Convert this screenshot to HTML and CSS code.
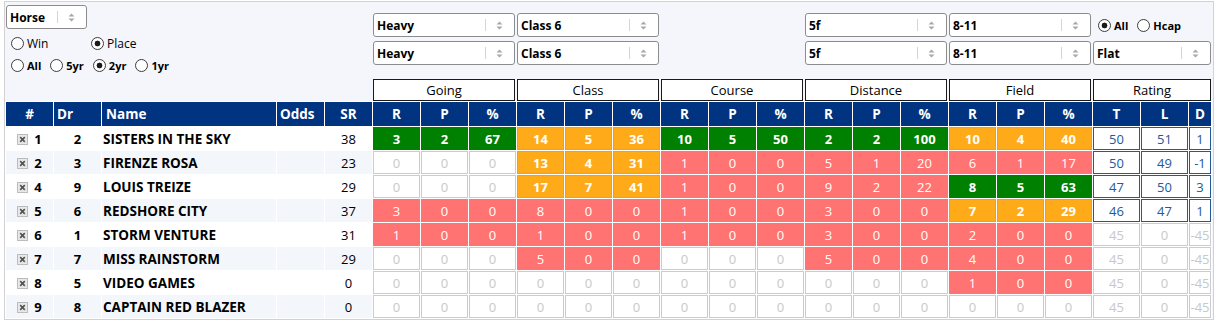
FILE: index.html
```html
<!DOCTYPE html>
<html>
 <head>
  <title>Form</title>
  <meta charset="utf-8" />
  <link rel="stylesheet" href="styles.css">
 </head>
 <body>
  <div class="panel">
   <div class="filters">
    <div class="f-left">
     <div class="sel horse"><span class="val">Horse</span><span class="arr"><svg width="7" height="11" viewBox="0 0 7 11"><path d="M0.5 4.5L3.5 1.5L6.5 4.5ZM0.5 6.5L3.5 9.5L6.5 6.5Z" fill="#a8a8a8"/></svg></span></div>
     <div class="radios big">
      <label class="win"><input type="radio" name="wp">Win</label>
      <label><input type="radio" name="wp" checked>Place</label>
     </div>
     <div class="radios">
      <label><input type="radio" name="yr">All</label>
      <label><input type="radio" name="yr">5yr</label>
      <label><input type="radio" name="yr" checked>2yr</label>
      <label><input type="radio" name="yr">1yr</label>
     </div>
    </div>
    <div class="f-col">
     <div class="sel"><span class="val">Heavy</span><span class="arr"><svg width="7" height="11" viewBox="0 0 7 11"><path d="M0.5 4.5L3.5 1.5L6.5 4.5ZM0.5 6.5L3.5 9.5L6.5 6.5Z" fill="#a8a8a8"/></svg></span></div>
     <div class="sel"><span class="val">Heavy</span><span class="arr"><svg width="7" height="11" viewBox="0 0 7 11"><path d="M0.5 4.5L3.5 1.5L6.5 4.5ZM0.5 6.5L3.5 9.5L6.5 6.5Z" fill="#a8a8a8"/></svg></span></div>
    </div>
    <div class="f-col">
     <div class="sel"><span class="val">Class 6</span><span class="arr"><svg width="7" height="11" viewBox="0 0 7 11"><path d="M0.5 4.5L3.5 1.5L6.5 4.5ZM0.5 6.5L3.5 9.5L6.5 6.5Z" fill="#a8a8a8"/></svg></span></div>
     <div class="sel"><span class="val">Class 6</span><span class="arr"><svg width="7" height="11" viewBox="0 0 7 11"><path d="M0.5 4.5L3.5 1.5L6.5 4.5ZM0.5 6.5L3.5 9.5L6.5 6.5Z" fill="#a8a8a8"/></svg></span></div>
    </div>
    <div class="f-col"></div>
    <div class="f-col">
     <div class="sel"><span class="val">5f</span><span class="arr"><svg width="7" height="11" viewBox="0 0 7 11"><path d="M0.5 4.5L3.5 1.5L6.5 4.5ZM0.5 6.5L3.5 9.5L6.5 6.5Z" fill="#a8a8a8"/></svg></span></div>
     <div class="sel"><span class="val">5f</span><span class="arr"><svg width="7" height="11" viewBox="0 0 7 11"><path d="M0.5 4.5L3.5 1.5L6.5 4.5ZM0.5 6.5L3.5 9.5L6.5 6.5Z" fill="#a8a8a8"/></svg></span></div>
    </div>
    <div class="f-col">
     <div class="sel"><span class="val">8-11</span><span class="arr"><svg width="7" height="11" viewBox="0 0 7 11"><path d="M0.5 4.5L3.5 1.5L6.5 4.5ZM0.5 6.5L3.5 9.5L6.5 6.5Z" fill="#a8a8a8"/></svg></span></div>
     <div class="sel"><span class="val">8-11</span><span class="arr"><svg width="7" height="11" viewBox="0 0 7 11"><path d="M0.5 4.5L3.5 1.5L6.5 4.5ZM0.5 6.5L3.5 9.5L6.5 6.5Z" fill="#a8a8a8"/></svg></span></div>
    </div>
    <div class="f-col">
     <div class="radios hcap">
      <label><input type="radio" name="hc" checked>All</label>
      <label><input type="radio" name="hc">Hcap</label>
     </div>
     <div class="sel"><span class="val">Flat</span><span class="arr"><svg width="7" height="11" viewBox="0 0 7 11"><path d="M0.5 4.5L3.5 1.5L6.5 4.5ZM0.5 6.5L3.5 9.5L6.5 6.5Z" fill="#a8a8a8"/></svg></span></div>
    </div>
   </div>

   <div class="groups">
    <div></div>
    <div class="grp">Going</div>
    <div class="grp">Class</div>
    <div class="grp">Course</div>
    <div class="grp">Distance</div>
    <div class="grp">Field</div>
    <div class="grp">Rating</div>
   </div>

   <table class="form">
    <thead>
     <tr>
      <th>#</th><th class="l">Dr</th><th class="l nm">Name</th><th class="l">Odds</th><th>SR</th>
      <th>R</th><th>P</th><th>%</th>
      <th>R</th><th>P</th><th>%</th>
      <th>R</th><th>P</th><th>%</th>
      <th>R</th><th>P</th><th>%</th>
      <th>R</th><th>P</th><th>%</th>
      <th>T</th><th>L</th><th class="dd">D</th>
     </tr>
    </thead>
    <tbody>
     <tr>
      <td class="no"><svg class="xb" width="11" height="11" viewBox="0 0 11 11"><rect x="0.5" y="0.5" width="10" height="10" fill="#e8e8e8" stroke="#bcbcbc"/><path d="M3.2 3.2L7.8 7.8M7.8 3.2L3.2 7.8" stroke="#555" stroke-width="1.7"/></svg>1</td>
      <td class="dr">2</td><td class="name">SISTERS IN THE SKY</td><td></td><td class="sr">38</td>
      <td class="g">3</td><td class="g">2</td><td class="g">67</td>
      <td class="o">14</td><td class="o">5</td><td class="o">36</td>
      <td class="g">10</td><td class="g">5</td><td class="g">50</td>
      <td class="g">2</td><td class="g">2</td><td class="g">100</td>
      <td class="o">10</td><td class="o">4</td><td class="o">40</td>
      <td class="t">50</td><td class="t">51</td><td class="t">1</td>
     </tr>
     <tr>
      <td class="no"><svg class="xb" width="11" height="11" viewBox="0 0 11 11"><rect x="0.5" y="0.5" width="10" height="10" fill="#e8e8e8" stroke="#bcbcbc"/><path d="M3.2 3.2L7.8 7.8M7.8 3.2L3.2 7.8" stroke="#555" stroke-width="1.7"/></svg>2</td>
      <td class="dr">3</td><td class="name">FIRENZE ROSA</td><td></td><td class="sr">23</td>
      <td class="z">0</td><td class="z">0</td><td class="z">0</td>
      <td class="o">13</td><td class="o">4</td><td class="o">31</td>
      <td class="r">1</td><td class="r">0</td><td class="r">0</td>
      <td class="r">5</td><td class="r">1</td><td class="r">20</td>
      <td class="r">6</td><td class="r">1</td><td class="r">17</td>
      <td class="t">50</td><td class="t">49</td><td class="t">-1</td>
     </tr>
     <tr>
      <td class="no"><svg class="xb" width="11" height="11" viewBox="0 0 11 11"><rect x="0.5" y="0.5" width="10" height="10" fill="#e8e8e8" stroke="#bcbcbc"/><path d="M3.2 3.2L7.8 7.8M7.8 3.2L3.2 7.8" stroke="#555" stroke-width="1.7"/></svg>4</td>
      <td class="dr">9</td><td class="name">LOUIS TREIZE</td><td></td><td class="sr">29</td>
      <td class="z">0</td><td class="z">0</td><td class="z">0</td>
      <td class="o">17</td><td class="o">7</td><td class="o">41</td>
      <td class="r">1</td><td class="r">0</td><td class="r">0</td>
      <td class="r">9</td><td class="r">2</td><td class="r">22</td>
      <td class="g">8</td><td class="g">5</td><td class="g">63</td>
      <td class="t">47</td><td class="t">50</td><td class="t">3</td>
     </tr>
     <tr>
      <td class="no"><svg class="xb" width="11" height="11" viewBox="0 0 11 11"><rect x="0.5" y="0.5" width="10" height="10" fill="#e8e8e8" stroke="#bcbcbc"/><path d="M3.2 3.2L7.8 7.8M7.8 3.2L3.2 7.8" stroke="#555" stroke-width="1.7"/></svg>5</td>
      <td class="dr">6</td><td class="name">REDSHORE CITY</td><td></td><td class="sr">37</td>
      <td class="r">3</td><td class="r">0</td><td class="r">0</td>
      <td class="r">8</td><td class="r">0</td><td class="r">0</td>
      <td class="r">1</td><td class="r">0</td><td class="r">0</td>
      <td class="r">3</td><td class="r">0</td><td class="r">0</td>
      <td class="o">7</td><td class="o">2</td><td class="o">29</td>
      <td class="t">46</td><td class="t">47</td><td class="t">1</td>
     </tr>
     <tr>
      <td class="no"><svg class="xb" width="11" height="11" viewBox="0 0 11 11"><rect x="0.5" y="0.5" width="10" height="10" fill="#e8e8e8" stroke="#bcbcbc"/><path d="M3.2 3.2L7.8 7.8M7.8 3.2L3.2 7.8" stroke="#555" stroke-width="1.7"/></svg>6</td>
      <td class="dr">1</td><td class="name">STORM VENTURE</td><td></td><td class="sr">31</td>
      <td class="r">1</td><td class="r">0</td><td class="r">0</td>
      <td class="r">1</td><td class="r">0</td><td class="r">0</td>
      <td class="r">1</td><td class="r">0</td><td class="r">0</td>
      <td class="r">3</td><td class="r">0</td><td class="r">0</td>
      <td class="r">2</td><td class="r">0</td><td class="r">0</td>
      <td class="tz">45</td><td class="tz">0</td><td class="tz">-45</td>
     </tr>
     <tr>
      <td class="no"><svg class="xb" width="11" height="11" viewBox="0 0 11 11"><rect x="0.5" y="0.5" width="10" height="10" fill="#e8e8e8" stroke="#bcbcbc"/><path d="M3.2 3.2L7.8 7.8M7.8 3.2L3.2 7.8" stroke="#555" stroke-width="1.7"/></svg>7</td>
      <td class="dr">7</td><td class="name">MISS RAINSTORM</td><td></td><td class="sr">29</td>
      <td class="z">0</td><td class="z">0</td><td class="z">0</td>
      <td class="r">5</td><td class="r">0</td><td class="r">0</td>
      <td class="z">0</td><td class="z">0</td><td class="z">0</td>
      <td class="r">5</td><td class="r">0</td><td class="r">0</td>
      <td class="r">4</td><td class="r">0</td><td class="r">0</td>
      <td class="tz">45</td><td class="tz">0</td><td class="tz">-45</td>
     </tr>
     <tr>
      <td class="no"><svg class="xb" width="11" height="11" viewBox="0 0 11 11"><rect x="0.5" y="0.5" width="10" height="10" fill="#e8e8e8" stroke="#bcbcbc"/><path d="M3.2 3.2L7.8 7.8M7.8 3.2L3.2 7.8" stroke="#555" stroke-width="1.7"/></svg>8</td>
      <td class="dr">5</td><td class="name">VIDEO GAMES</td><td></td><td class="sr">0</td>
      <td class="z">0</td><td class="z">0</td><td class="z">0</td>
      <td class="z">0</td><td class="z">0</td><td class="z">0</td>
      <td class="z">0</td><td class="z">0</td><td class="z">0</td>
      <td class="z">0</td><td class="z">0</td><td class="z">0</td>
      <td class="r">1</td><td class="r">0</td><td class="r">0</td>
      <td class="tz">45</td><td class="tz">0</td><td class="tz">-45</td>
     </tr>
     <tr>
      <td class="no"><svg class="xb" width="11" height="11" viewBox="0 0 11 11"><rect x="0.5" y="0.5" width="10" height="10" fill="#e8e8e8" stroke="#bcbcbc"/><path d="M3.2 3.2L7.8 7.8M7.8 3.2L3.2 7.8" stroke="#555" stroke-width="1.7"/></svg>9</td>
      <td class="dr">8</td><td class="name">CAPTAIN RED BLAZER</td><td></td><td class="sr">0</td>
      <td class="z">0</td><td class="z">0</td><td class="z">0</td>
      <td class="z">0</td><td class="z">0</td><td class="z">0</td>
      <td class="z">0</td><td class="z">0</td><td class="z">0</td>
      <td class="z">0</td><td class="z">0</td><td class="z">0</td>
      <td class="z">0</td><td class="z">0</td><td class="z">0</td>
      <td class="tz">45</td><td class="tz">0</td><td class="tz">-45</td>
     </tr>
    </tbody>
   </table>
  </div>
 </body>
</html>
```

FILE: styles.css
```css
* {box-sizing: border-box;}
body {margin: 0; background: #fff; color: #000; font-family: "Open Sans", "Noto Sans", sans-serif; font-size: 13px;}

.panel {margin: 1px 0 0 4px; width: 1210px; border: 1px solid #d2d2d2; background: #f4f6fb;}

/* filter area, columns follow the table groups */
.filters {display: grid; grid-template-columns: 367px repeat(5, 144px) 120px; height: 77px;}
.f-left {padding: 3px 0 0 1px;}
.f-col {display: flex; flex-direction: column; gap: 4px; padding: 11px 1px 0;}

.sel {display: flex; align-items: center; height: 24px; padding-left: 3px; border: 1px solid #8c8c8c; border-radius: 3px; background: #fff; font-size: 12px; font-weight: bold;}
.sel .arr {display: flex; align-items: center; justify-content: center; width: 29px; height: 12px; margin-left: auto; padding-right: 2px; border-left: 1px solid #d4d4d4;}
.sel.horse {width: 81px;}

.radios {display: flex; align-items: center; height: 20px; padding-left: 5px; font-size: 11px; font-weight: bold;}
.radios label {display: flex; align-items: center; margin-right: 9px;}
.radios.big {height: 20px; margin: 4px 0 2px; font-size: 12px; font-weight: normal;}
.radios.big .win {width: 80px; margin-right: 0;}
.radios.hcap {height: 24px; padding-left: 5px;}
.radios input {appearance: none; -webkit-appearance: none; width: 13px; height: 13px; margin: 0 3px 0 0; border: 1px solid #3c3c3c; border-radius: 50%; background: #fff;}
.radios input:checked {background: radial-gradient(circle, #1a1a1a 0 2.6px, #fff 3.2px);}

/* group titles */
.groups {display: grid; grid-template-columns: 367px repeat(5, 144px) 120px; height: 22px;}
.grp {margin: 0 1px; border: 1px solid #1a1a1a; background: #fff; text-align: center; line-height: 20px;}

/* form table */
.form {width: 1207px; table-layout: fixed; border-collapse: separate; border-spacing: 1px; background: #fff;}
.form th {width: 47px; height: 24px; padding: 0; background: #003481; color: #fff; font-size: 13.5px; font-weight: bold; text-align: center;}
.form th.l {text-align: left; padding-left: 3px;}
.form th.nm {width: 174px; padding-left: 4px;}
.form th.dd {width: 22px;}
.form td {height: 23px; padding: 0; text-align: center; white-space: nowrap; overflow: hidden;}
.form tbody tr:nth-child(even) td {background: #f3f6fb;}

.form td.no {font-weight: bold;}
.form .xb {margin-right: 6px; vertical-align: -1px;}
.form td.dr {font-weight: bold;}
.form td.name {padding-left: 1px; text-align: left; font-weight: bold; font-size: 13.5px;}

.form td.g, .form td.o, .form td.r, .form td.z, .form td.t, .form td.tz {border: 1px solid #ccc;}
.form tbody tr td.g {background: #008000; border-color: #008000; color: #fff; font-weight: bold;}
.form tbody tr td.o {background: #ffab19; border-color: #f5a10d; color: #fff; font-weight: bold;}
.form tbody tr td.r {background: #ff7373; border-color: #ff7373; color: #fff;}
.form tbody tr td.z {background: #fff; color: #c8c8c8;}
.form tbody tr td.t {background: #fff; border-color: #225a98; color: #225a98;}
.form tbody tr td.tz {background: #fff; color: #c8c8c8;}
```
